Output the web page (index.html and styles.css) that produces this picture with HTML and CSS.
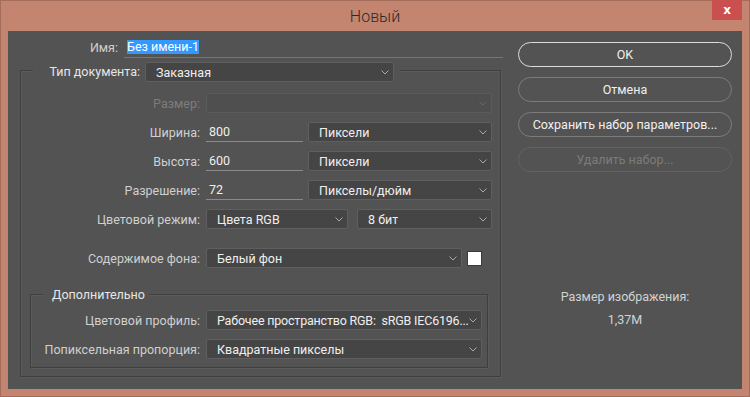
FILE: index.html
```html
<!DOCTYPE html>
<html>
<head>
  <meta charset="utf-8">
  <link rel="stylesheet" href="styles.css">
</head>
<body>
  <div class="window">
    <div class="titlebar">
      <span></span>
      <span class="title">Новый</span>
      <button class="close">x</button>
    </div>

    <div class="dialog">
      <div class="main">
        <div class="name-row">
          <label class="name-label">Имя:</label>
          <div class="name-input"><span class="selected">Без имени-1</span></div>
        </div>

        <div class="group outer">
          <div class="legend">
            <label class="legend-label">Тип документа:</label>
            <div class="select w-doc"><span>Заказная</span><svg class="chev" width="8" height="5"><path d="M0.5 0.5L4 4L7.5 0.5"/></svg></div>
          </div>

          <div class="rows">
            <div class="row disabled">
              <label>Размер:</label>
              <div class="select w-full"><span></span><svg class="chev" width="8" height="5"><path d="M0.5 0.5L4 4L7.5 0.5"/></svg></div>
            </div>
            <div class="row">
              <label>Ширина:</label>
              <div class="field">800</div>
              <div class="select w-unit"><span>Пиксели</span><svg class="chev" width="8" height="5"><path d="M0.5 0.5L4 4L7.5 0.5"/></svg></div>
            </div>
            <div class="row">
              <label>Высота:</label>
              <div class="field">600</div>
              <div class="select w-unit"><span>Пиксели</span><svg class="chev" width="8" height="5"><path d="M0.5 0.5L4 4L7.5 0.5"/></svg></div>
            </div>
            <div class="row">
              <label>Разрешение:</label>
              <div class="field">72</div>
              <div class="select w-unit"><span>Пикселы/дюйм</span><svg class="chev" width="8" height="5"><path d="M0.5 0.5L4 4L7.5 0.5"/></svg></div>
            </div>
            <div class="row">
              <label>Цветовой режим:</label>
              <div class="select w-mode"><span>Цвета RGB</span><svg class="chev" width="8" height="5"><path d="M0.5 0.5L4 4L7.5 0.5"/></svg></div>
              <div class="select w-bits"><span>8 бит</span><svg class="chev" width="8" height="5"><path d="M0.5 0.5L4 4L7.5 0.5"/></svg></div>
            </div>
            <div class="row bg-row">
              <label>Содержимое фона:</label>
              <div class="select w-bg"><span>Белый фон</span><svg class="chev" width="8" height="5"><path d="M0.5 0.5L4 4L7.5 0.5"/></svg></div>
              <div class="swatch"></div>
            </div>
          </div>

          <div class="group inner">
            <div class="legend legend-text">Дополнительно</div>
            <div class="rows">
              <div class="row">
                <label>Цветовой профиль:</label>
                <div class="select w-adv"><span class="profile">Рабочее пространство RGB:&nbsp; sRGB IEC6196...</span><svg class="chev" width="8" height="5"><path d="M0.5 0.5L4 4L7.5 0.5"/></svg></div>
              </div>
              <div class="row">
                <label>Попиксельная пропорция:</label>
                <div class="select w-adv"><span>Квадратные пикселы</span><svg class="chev" width="8" height="5"><path d="M0.5 0.5L4 4L7.5 0.5"/></svg></div>
              </div>
            </div>
          </div>
        </div>
      </div>

      <div class="side">
        <button class="btn default">OK</button>
        <button class="btn">Отмена</button>
        <button class="btn">Сохранить набор параметров...</button>
        <button class="btn" disabled>Удалить набор...</button>

        <div class="info">
          <div>Размер изображения:</div>
          <div>1,37M</div>
        </div>
      </div>
    </div>
  </div>
</body>
</html>
```

FILE: styles.css
```css
* { box-sizing: border-box; }
body {
  margin: 0;
  background: #c3856f;
  font-family: Roboto, "Noto Sans", sans-serif;
  font-size: 12.5px;
}

.window {
  width: 750px;
  height: 397px;
  background: #c3856f;
  border: 1px solid #a46d5b;
  padding: 0 7px 7px;
}

/* title bar */
.titlebar {
  height: 30px;
  display: grid;
  grid-template-columns: 1fr auto 1fr;
}
.title {
  align-self: center;
  font-family: Roboto, sans-serif;
  font-weight: 300;
  font-size: 16px;
  color: #2a2a2a;
}
.close {
  justify-self: end;
  align-self: start;
  margin-top: -1px;
  width: 30px;
  height: 20px;
  border: none;
  padding: 0;
  background: #c9504f;
  color: #fff;
  font-family: "DejaVu Sans", sans-serif;
  font-size: 12px;
  font-weight: bold;
  line-height: 18px;
}

/* dialog body */
.dialog {
  height: 358px;
  background: #535353;
  display: flex;
}
.main {
  flex: none;
  width: 483px;
  margin-left: 12px;
}

.name-row {
  display: flex;
  margin-top: 7px;
  height: 20px;
}
.name-label {
  width: 98px;
  text-align: right;
  line-height: 20px;
  color: #d0d0d0;
}
.name-input {
  flex: none;
  width: 379px;
  margin-left: 6px;
  padding-left: 3px;
  border-bottom: 1px solid #3d80d8;
}
.selected {
  display: inline-block;
  margin-top: 2px;
  line-height: 14px;
  background: #3399ff;
  color: #fff;
}

/* etched group boxes */
.group {
  border: 1px solid #3f3f3f;
  box-shadow: inset 1px 1px 0 #5b5b5b, 1px 1px 0 #5b5b5b;
}
.outer {
  width: 481px;
  margin-top: 12px;
  padding-bottom: 8px;
}
.inner {
  margin: 26px 12px 0 9px;
  padding-bottom: 8px;
}

.legend {
  display: flex;
  width: fit-content;
  background: #535353;
}
.outer > .legend {
  margin: -9px 0 0 12px;
  padding: 0 5px 0 15px;
  gap: 5px;
}
.legend-label {
  width: 92px;
  text-align: right;
  line-height: 20px;
  color: #e6e6e6;
  white-space: nowrap;
}
.legend-text {
  margin: -8px 0 0 12px;
  padding: 0 4px 0 9px;
  line-height: 16px;
  color: #e6e6e6;
}

.rows {
  display: flex;
  flex-direction: column;
  gap: 9px;
  margin-top: 11px;
}
.inner .rows { margin-top: 7px; }

.row {
  display: flex;
  align-items: center;
  height: 20px;
}
.row label {
  flex: none;
  width: 179px;
  margin-right: 6px;
  text-align: right;
  color: #d0d0d0;
  white-space: nowrap;
}
.inner .row label { width: 169px; }
.row.disabled label { color: #7d7d7d; }
.bg-row { margin-top: 10px; }

/* controls */
.select {
  flex: none;
  height: 20px;
  display: flex;
  align-items: center;
  justify-content: space-between;
  padding: 0 4px 0 10px;
  background: #454545;
  border: 1px solid #5f5f5f;
  border-radius: 2px;
  color: #efefef;
  white-space: nowrap;
  overflow: hidden;
}
.select span { overflow: hidden; }
.select .profile { letter-spacing: -0.2px; }
.chev { flex: none; }
.chev path { fill: none; stroke: #a9a9a9; stroke-width: 1; }
.row.disabled .select {
  background: #4f4f4f;
  border-color: #5a5a5a;
}
.row.disabled .chev path { stroke: #686868; }

.w-doc { width: 249px; }
.w-full { width: 286px; }
.w-unit { width: 184px; margin-left: 5px; }
.w-mode { width: 142px; }
.w-bits { width: 135px; margin-left: 9px; }
.w-bg { width: 256px; }
.w-adv { width: 276px; }

.field {
  flex: none;
  width: 97px;
  height: 20px;
  padding-left: 3px;
  line-height: 19px;
  color: #efefef;
  border-bottom: 1px solid #8a8a8a;
}
.swatch {
  flex: none;
  width: 15px;
  height: 15px;
  margin-left: 5px;
  background: #fff;
  border: 1px solid #3a3a3a;
}

/* right column */
.side {
  flex: none;
  width: 214px;
  margin-left: 15px;
  padding-top: 11px;
  display: flex;
  flex-direction: column;
  gap: 10px;
}
.btn {
  height: 25px;
  border: 1px solid #7c7c7c;
  border-radius: 13px;
  background: #535353;
  color: #f0f0f0;
  font-family: inherit;
  font-size: 12.5px;
  padding: 0;
}
.btn.default { border-color: #dcdcdc; }
.btn:disabled {
  border-color: #626262;
  color: #7b7b7b;
}
.info {
  margin-top: 103px;
  text-align: center;
  line-height: 23px;
  color: #cfd3d6;
}
```
